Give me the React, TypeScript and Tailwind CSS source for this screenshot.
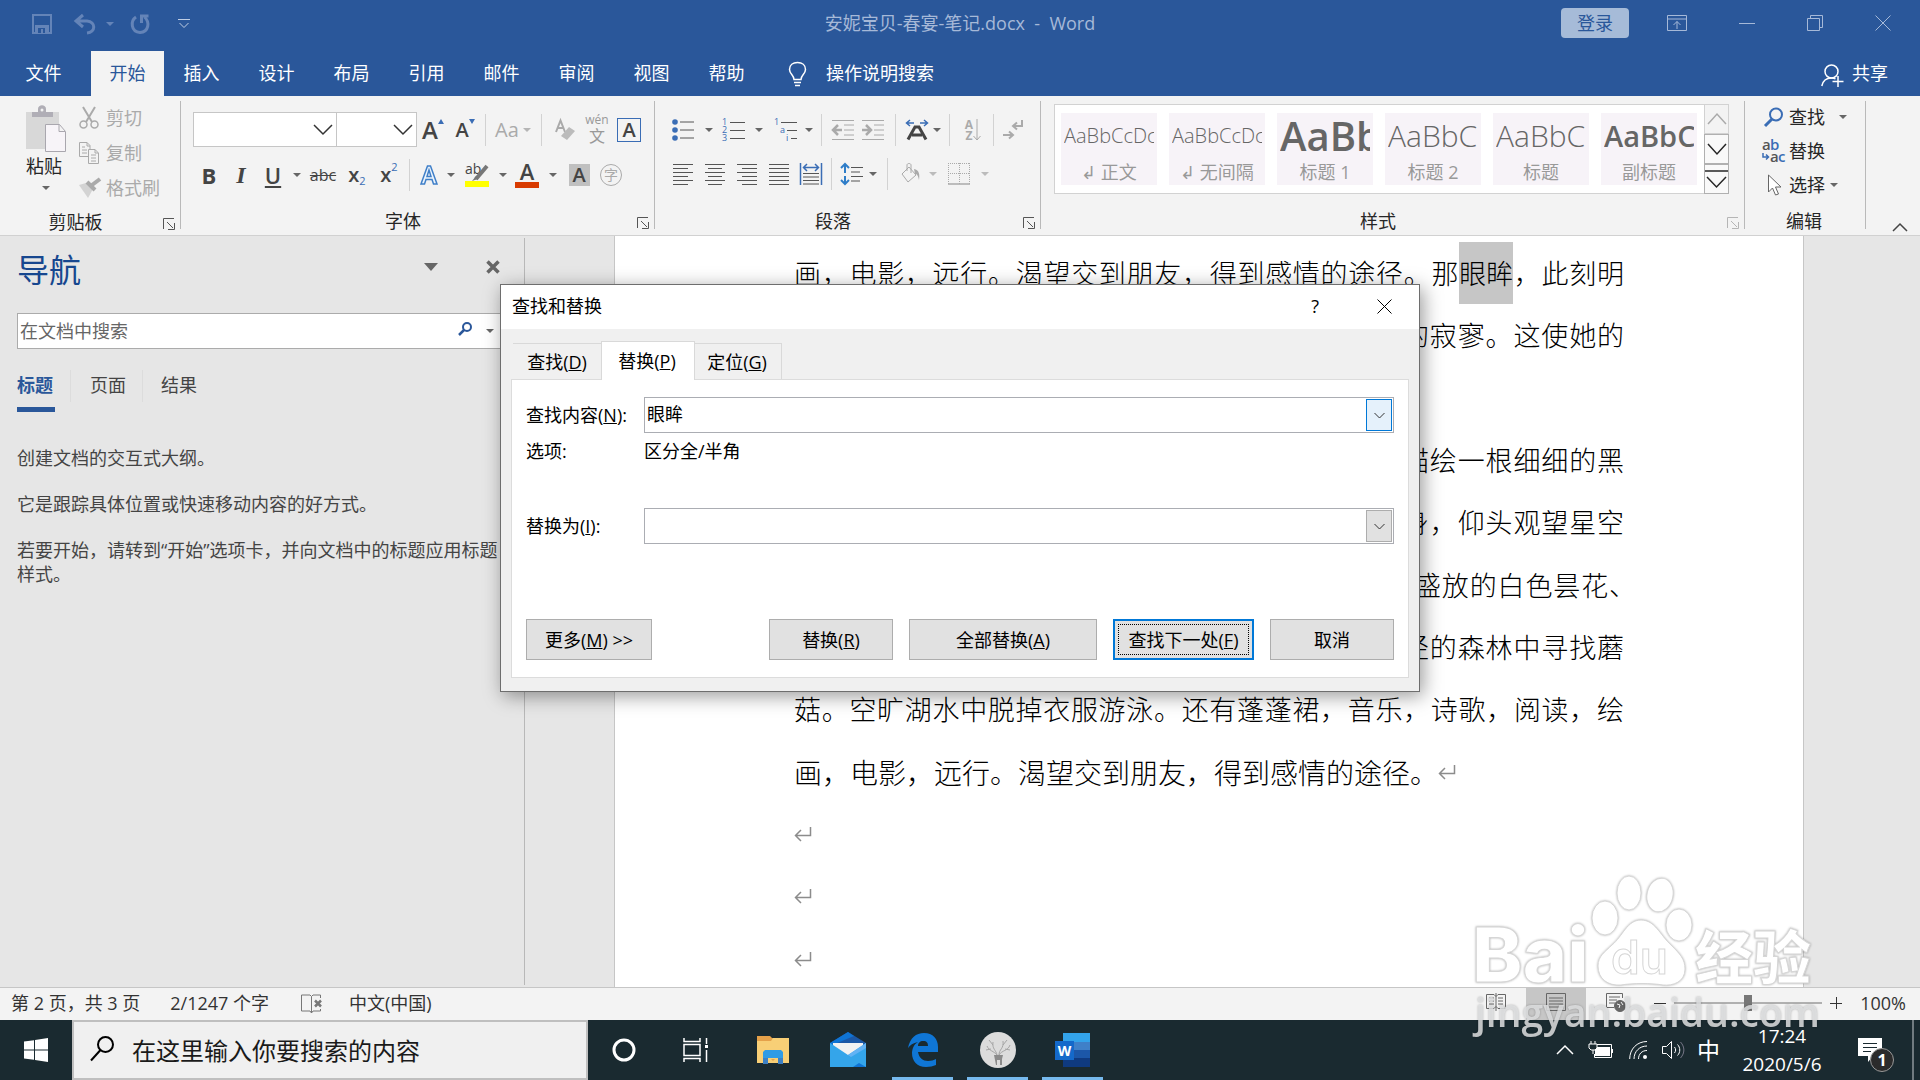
import type { ReactNode } from "react";

interface IconProps {
	w: number;
	h: number;
	className?: string;
	children: ReactNode;
}

function Icon({ w, h, className = "", children }: IconProps) {
	return (
		<svg
			width={w}
			height={h}
			viewBox={`0 0 ${w} ${h}`}
			fill="none"
			stroke="currentColor"
			className={`shrink-0 overflow-visible ${className}`}
			aria-hidden="true"
		>
			{children}
		</svg>
	);
}

function Caret({ className = "text-[#666]" }: { className?: string }) {
	return (
		<Icon w={8} h={4} className={className}>
			<path d="M0 0h8L4 4z" fill="currentColor" stroke="none" />
		</Icon>
	);
}

function CaretButton({
	className,
	tone,
	label,
}: {
	className: string;
	tone?: string;
	label: string;
}) {
	return (
		<button
			type="button"
			aria-label={label}
			className={`flex h-8 shrink-0 items-center justify-center ${className}`}
		>
			<Caret className={tone} />
		</button>
	);
}

function Tool({
	label,
	className = "w-8",
	children,
}: {
	label: string;
	className?: string;
	children: ReactNode;
}) {
	return (
		<button
			type="button"
			aria-label={label}
			className={`flex h-8 shrink-0 items-center justify-center ${className}`}
		>
			{children}
		</button>
	);
}

function Divider({ className = "w-2" }: { className?: string }) {
	return (
		<div className={`flex h-8 shrink-0 justify-center ${className}`}>
			<div className="w-px bg-[#d2d2d2]" />
		</div>
	);
}

function GroupDivider() {
	return <div className="mt-[5px] h-32 w-px shrink-0 bg-[#b9b9b9]" />;
}

function GroupLabel({
	children,
	dim = false,
}: {
	children: ReactNode;
	dim?: boolean;
}) {
	return (
		<div className="mt-auto flex h-7 items-center">
			<span className="flex-1 pr-3 text-center">{children}</span>
			<button type="button" aria-label="更多选项" className="mr-[5px] mt-1">
				<Icon w={12} h={12} className={dim ? "text-[#b5b5b5]" : "text-[#555]"}>
					<path d="M.5 11V.5H11M4 4l6 6M11.5 5v6.5H5" />
				</Icon>
			</button>
		</div>
	);
}

function Lines({ rows }: { rows: [number, number][] }) {
	return (
		<Icon w={20} h={22} className="text-[#555]">
			{rows.map(([from, to], i) => (
				<path key={`${from}-${i * 4}`} d={`M${from} ${i * 4 + 1.5}H${to}`} />
			))}
		</Icon>
	);
}

function TitleBar() {
	return (
		<div className="relative flex h-[51px] items-start text-[#a6b9d8]">
			<div className="flex h-12 items-center pl-8 text-[#6484b8]">
				<button type="button" aria-label="保存">
					<Icon w={20} h={20}>
						<path d="M1 1h18v18H1z" strokeWidth="2" />
						<path d="M3 11h14v8H3z" fill="currentColor" stroke="none" />
						<path d="M6 14h7v5H6z" fill="#2a579a" stroke="none" />
						<path d="M9 15h2v4H9z" fill="currentColor" stroke="none" />
					</Icon>
				</button>
				<button type="button" aria-label="撤消" className="ml-[22px]">
					<Icon w={22} h={20}>
						<path d="M9 1L2 7l7 6M2 7h11c9 1 9 11 0 12" strokeWidth="3" />
					</Icon>
				</button>
				<button type="button" aria-label="撤消列表" className="ml-2.5">
					<Caret className="text-[#6484b8]" />
				</button>
				<button type="button" aria-label="重复" className="ml-4">
					<Icon w={20} h={20}>
						<path d="M6 3C0 7 1 18 10 18.500C19 18 20 8 14.500 3" strokeWidth="3" />
						<path d="M11.500 9V2h7" strokeWidth="3" />
					</Icon>
				</button>
				<button type="button" aria-label="自定义快速访问工具栏" className="ml-7">
					<Icon w={12} h={10} className="text-[#c0cee4]">
						<path d="M0 .5h12M1.500 4l4.500 4.500L10.500 4" />
					</Icon>
				</button>
			</div>
			<div className="absolute inset-x-0 top-0 flex h-12 justify-center whitespace-pre text-lg leading-[47px]">
				安妮宝贝-春宴-笔记.docx  -  Word
			</div>
			<div className="relative ml-auto flex h-[46px] items-center pr-[29px]">
				<button
					type="button"
					className="mr-[38px] h-[30px] w-[68px] rounded-sm bg-[#a6bbd8] text-lg leading-[30px] text-[#2a579a]"
				>
					登录
				</button>
				<button type="button" aria-label="功能区显示选项" className="mr-[52px]">
					<Icon w={20} h={16}>
						<path d="M.5.5h19v15H.5zM.5 4h19M10 14V6.500M6.500 10L10 6.500l3.500 3.500" />
					</Icon>
				</button>
				<button type="button" aria-label="最小化" className="mr-[52px]">
					<Icon w={16} h={16}>
						<path d="M0 8.500h16" />
					</Icon>
				</button>
				<button type="button" aria-label="向下还原" className="mr-[52px]">
					<Icon w={16} h={16}>
						<path d="M.5 3.500h12v12H.5zM3.500 3V.5h12v12H13" />
					</Icon>
				</button>
				<button type="button" aria-label="关闭">
					<Icon w={16} h={16}>
						<path d="M.5.5l15 15M15.500.5l-15 15" />
					</Icon>
				</button>
			</div>
		</div>
	);
}

const ribbonTabs = ["插入", "设计", "布局", "引用", "邮件", "审阅", "视图", "帮助"];

function RibbonTabs() {
	return (
		<div className="flex h-[45px] items-stretch text-lg leading-[43px] text-white">
			<button type="button" className="w-[91px] pr-1">
				文件
			</button>
			<button type="button" className="w-[73px] bg-[#f3f3f3] text-[#2a579a]">
				开始
			</button>
			{ribbonTabs.map((tab) => (
				<button type="button" key={tab} className="w-[75px]">
					{tab}
				</button>
			))}
			<button type="button" className="flex items-center pl-6">
				<Icon w={20} h={26} className="mr-[18px]">
					<path
						d="M6 18.500C6 14 1.500 13 1.500 8.500C1.500 4 5 1.500 9.500 1.500S17.500 4 17.500 8.500C17.500 13 13 14 13 18.500zM6 21.500h7M7 24.500h5"
						strokeWidth="1.500"
					/>
				</Icon>
				操作说明搜索
			</button>
			<button type="button" className="ml-auto mr-8 flex items-center">
				<Icon w={23} h={24} className="mr-2 mt-1">
					<circle cx="10.500" cy="7.500" r="6.500" strokeWidth="1.500" />
					<path
						d="M.8 22c1-5 4-8 9.700-8 2 0 3 .3 4 1M17 12v11M11.500 17.500h11"
						strokeWidth="1.500"
					/>
				</Icon>
				共享
			</button>
		</div>
	);
}

function ClipboardGroup() {
	return (
		<div className="flex w-[180px] shrink-0 flex-col">
			<div className="flex pl-[25px] pt-2">
				<button type="button" className="flex w-[42px] flex-col items-center">
					<Icon w={42} h={48} className="mb-0.5">
						<path d="M1 8h33v37H1z" fill="#d8d8d8" stroke="none" />
						<path
							d="M7 13V8h6V5c0-5 8-5 8 0v3h7v5z"
							fill="#b0aeb6"
							stroke="none"
						/>
						<circle cx="17" cy="6" r="1.500" fill="#f3f3f3" stroke="none" />
						<path d="M20.500 20.500h14l6 7v20h-20zM34 20.500v7h6" fill="#f7f4f8" stroke="#a9a7ae" />
					</Icon>
					<span className="pr-1 leading-6">粘贴</span>
					<span className="mt-2 pb-1">
						<Caret />
					</span>
				</button>
				<div className="ml-3 flex flex-col text-[#aaa]">
					<button type="button" className="flex h-[35px] items-center pb-2">
						<Icon w={20} h={22} className="mr-[7px]">
							<path d="M4 0l9 15M16 0L7 15" strokeWidth="2" />
							<circle cx="4.500" cy="17.500" r="3.500" strokeWidth="1.500" />
							<circle cx="15.500" cy="17.500" r="3.500" strokeWidth="1.500" />
						</Icon>
						剪切
					</button>
					<button type="button" className="flex h-[35px] items-center pb-2">
						<Icon w={20} h={22} className="mr-[7px]">
							<path d="M9 14.500H.5V.5H8l3 3V7M8 .5V4h3M3 5h3M3 8h5M3 11h5" />
							<path d="M9.500 7.500H16l3.500 3.500v10.500h-10zM16 7.500V11h3M12 13h5M12 16h5M12 19h5" />
						</Icon>
						复制
					</button>
					<button type="button" className="flex h-[35px] items-center pb-2">
						<Icon w={22} h={20} className="mr-[5px]">
							<path d="M0 7l7-2 7 6-5 9z" fill="#d3d3d3" stroke="none" />
							<path d="M8 4l8 8" strokeWidth="4" />
							<path d="M13 7l8-6" strokeWidth="4" />
						</Icon>
						格式刷
					</button>
				</div>
			</div>
			<GroupLabel>剪贴板</GroupLabel>
		</div>
	);
}

function RibbonSelect({ label, className }: { label: string; className: string }) {
	return (
		<div className={`relative h-[35px] shrink-0 ${className}`}>
			<select
				aria-label={label}
				className="h-full w-full appearance-none border border-[#c6c6c6] bg-white"
			/>
			<Icon
				w={20}
				h={12}
				className="pointer-events-none absolute right-1 top-3 text-[#333]"
			>
				<path d="M1 1l9 9 9-9" strokeWidth="1.500" />
			</Icon>
		</div>
	);
}

function FontGroup() {
	return (
		<div className="flex w-[473px] shrink-0 flex-col text-[#444]">
			<div className="flex items-center pl-3 pt-4">
				<RibbonSelect label="字体" className="w-36" />
				<RibbonSelect label="字号" className="-ml-px w-[81px]" />
				<Tool label="增大字号">
					<span className="text-2xl font-semibold">A</span>
					<Icon w={6} h={5} className="mb-4 text-[#3a6db5]">
						<path d="M0 5l3-5 3 5z" fill="currentColor" stroke="none" />
					</Icon>
				</Tool>
				<Tool label="减小字号">
					<span className="text-xl font-semibold">A</span>
					<Icon w={6} h={5} className="mb-4 text-[#3a6db5]">
						<path d="M0 0h6L3 5z" fill="currentColor" stroke="none" />
					</Icon>
				</Tool>
				<Divider />
				<Tool label="更改大小写" className="w-12 gap-1 text-[#aaa]">
					<span className="text-xl">Aa</span>
					<Caret className="text-[#b5b5b5]" />
				</Tool>
				<Divider />
				<Tool label="清除所有格式" className="w-10">
					<Icon w={20} h={22} className="text-[#aaa]">
						<path d="M1 13L5.500 1.500 10 13M3 9h5" strokeWidth="2" />
						<path d="M6 17l8-9 6 4-8 9z" fill="#bbb" stroke="none" />
					</Icon>
				</Tool>
				<Tool label="拼音指南" className="w-6 flex-col text-[#999]">
					<span className="text-xs leading-3">wén</span>
					<span className="text-base leading-5">文</span>
				</Tool>
				<Tool label="字符边框" className="w-10">
					<span className="h-6 w-6 border border-[#3a6db5] text-center text-xl font-semibold leading-[22px]">
						A
					</span>
				</Tool>
			</div>
			<div className="flex items-center pl-3 pt-3">
				<Tool label="加粗">
					<span className="text-[22px] font-bold">B</span>
				</Tool>
				<Tool label="倾斜" className="w-8">
					<span className="font-['Liberation_Serif',serif] text-2xl font-bold italic">
						I
					</span>
				</Tool>
				<Tool label="下划线" className="w-8">
					<span className="text-[22px] font-semibold underline decoration-2 underline-offset-2">
						U
					</span>
				</Tool>
				<CaretButton label="下划线样式" className="w-4" />
				<Tool label="删除线" className="w-9">
					<span className="text-base line-through">abc</span>
				</Tool>
				<Tool label="下标">
					<span className="text-xl font-semibold leading-6">x</span>
					<span className="mt-3 text-[11px] text-[#3a6db5]">2</span>
				</Tool>
				<Tool label="上标">
					<span className="text-xl font-semibold leading-6">x</span>
					<span className="mb-4 text-[11px] text-[#3a6db5]">2</span>
				</Tool>
				<Divider />
				<Tool label="文本效果">
					<Icon w={18} h={20} className="text-[#3f7fc8]">
						<path
							d="M1 19L7.500 1h3L17 19h-3.500l-1.500-4.500H6L4.500 19zM7 11.500h4L9 5z"
							fill="#eaf3fc"
							strokeWidth="1.500"
						/>
					</Icon>
				</Tool>
				<CaretButton label="文本效果列表" className="w-3" />
				<Tool label="突出显示" className="w-10">
					<Icon w={24} h={26}>
						<text
							x="0"
							y="12"
							fontSize="14"
							fill="#444"
							stroke="none"
							fontFamily="Open Sans"
						>
							ab
						</text>
						<path d="M22 4L11 17" stroke="#777" strokeWidth="4" />
						<path d="M11 14l-4 5 6-2z" fill="#777" stroke="none" />
						<path d="M0 19h24v6H0z" fill="#ffff00" stroke="none" />
					</Icon>
				</Tool>
				<CaretButton label="突出显示颜色" className="w-3" />
				<Tool label="字体颜色" className="w-9 flex-col">
					<span className="text-[22px] font-semibold leading-[18px]">A</span>
					<span className="mt-0.5 h-1.5 w-6 bg-[#d83b01]" />
				</Tool>
				<CaretButton label="字体颜色列表" className="w-4" />
				<Tool label="字符底纹" className="w-9">
					<span className="h-[22px] w-[21px] bg-[#c0c0c0] text-center text-xl font-semibold leading-[22px]">
						A
					</span>
				</Tool>
				<Tool label="带圈字符" className="w-7">
					<span className="h-[22px] w-[22px] rounded-full border border-[#aaa] text-center text-sm leading-5 text-[#aaa]">
						字
					</span>
				</Tool>
			</div>
			<div className="mt-auto text-[#262626]">
				<GroupLabel>字体</GroupLabel>
			</div>
		</div>
	);
}

function ParagraphGroup() {
	return (
		<div className="flex w-[385px] shrink-0 flex-col text-[#555]">
			<div className="flex items-center pl-1.5 pt-[18px]">
				<Tool label="项目符号" className="w-11">
					<Icon w={22} h={24}>
						<path d="M8 4h14M8 12h14M8 20h14" />
						<g fill="#3a6db5" stroke="none">
							<circle cx="3" cy="4" r="2.800" />
							<circle cx="3" cy="12" r="2.800" />
							<circle cx="3" cy="20" r="2.800" />
						</g>
					</Icon>
				</Tool>
				<CaretButton label="项目符号库" className="w-2" />
				<Tool label="编号" className="w-10">
					<Icon w={23} h={24}>
						<path d="M8 4.500h15M8 12.500h15M8 20.500h15" />
						<g fill="#3a6db5" stroke="none" fontSize="9" fontFamily="Open Sans">
							<text x="0" y="7">1</text>
							<text x="0" y="15">2</text>
							<text x="0" y="23">3</text>
						</g>
					</Icon>
				</Tool>
				<CaretButton label="编号库" className="w-3" />
				<Tool label="多级列表" className="w-10">
					<Icon w={24} h={24}>
						<path d="M8 4.500h16M14 12.500h10M18 20.500h6" />
						<g fill="#3a6db5" stroke="none" fontSize="9" fontFamily="Open Sans">
							<text x="1" y="7">1</text>
							<text x="7" y="15">a</text>
							<text x="13" y="23">i</text>
						</g>
					</Icon>
				</Tool>
				<CaretButton label="多级列表库" className="w-2" />
				<Divider className="w-4" />
				<Tool label="减少缩进量" className="w-7">
					<Icon w={22} h={22} className="text-[#aaa]">
						<path d="M0 1.500h22M12 6h10M12 11h10M12 16h10M0 20.500h22" />
						<path d="M6 6l-5 5 5 5M1 11h9" strokeWidth="2.500" />
					</Icon>
				</Tool>
				<Tool label="增加缩进量">
					<Icon w={22} h={22} className="text-[#aaa]">
						<path d="M0 1.500h22M12 6h10M12 11h10M12 16h10M0 20.500h22" />
						<path d="M4 6l5 5-5 5M0 11h9" strokeWidth="2.500" />
					</Icon>
				</Tool>
				<Divider className="w-3" />
				<Tool label="中文版式">
					<Icon w={24} h={22}>
						<path d="M3 20.500L10 8h4l7 12.500M7 16h10" stroke="#444" strokeWidth="3" />
						<path
							d="M5 1L1.500 4 5 7M1.500 4H9M19 1l3.500 3L19 7M22.500 4H15"
							stroke="#3a6db5"
							strokeWidth="1.500"
						/>
					</Icon>
				</Tool>
				<CaretButton label="中文版式列表" className="w-2" />
				<Divider className="w-4" />
				<Tool label="排序" className="w-8">
					<span className="flex flex-col text-xs font-bold leading-[11px] text-[#aaa]">
						<span>A</span>
						<span>Z</span>
					</span>
					<Icon w={8} h={22} className="text-[#aaa]">
						<path d="M4 0v21M.5 17L4 21l3.500-4" />
					</Icon>
				</Tool>
				<Divider />
				<Tool label="显示编辑标记">
					<Icon w={20} h={20} className="text-[#aaa]">
						<path
							d="M19 0v6h-8M14 2.500L10 6l4 3.500M0 15h9M6 11.500L10 15l-4 3.500"
							strokeWidth="2"
						/>
					</Icon>
				</Tool>
			</div>
			<div className="flex items-center pl-3 pt-3">
				<Tool label="左对齐">
					<Lines rows={[[0, 20], [0, 15], [0, 20], [0, 15], [0, 20], [0, 15]]} />
				</Tool>
				<Tool label="居中">
					<Lines rows={[[0, 20], [3, 17], [0, 20], [3, 17], [0, 20], [3, 17]]} />
				</Tool>
				<Tool label="右对齐">
					<Lines rows={[[0, 20], [5, 20], [0, 20], [5, 20], [0, 20], [5, 20]]} />
				</Tool>
				<Tool label="两端对齐">
					<Lines rows={[[0, 20], [0, 20], [0, 20], [0, 20], [0, 20], [0, 20]]} />
				</Tool>
				<Tool label="分散对齐">
					<Icon w={22} h={22}>
						<path d="M3 10.500h16M3 14h16M3 17.500h16M3 21h16" />
						<path
							d="M.5 0v22M21.500 0v22M3 4.500h16M7 1L3.500 4.500 7 8M15 1l3.500 3.500L15 8"
							stroke="#3a6db5"
							strokeWidth="1.500"
						/>
					</Icon>
				</Tool>
				<Divider />
				<Tool label="行距">
					<Icon w={23} h={22}>
						<path d="M11 4.500h12M11 9h9M11 13.500h12M11 18h9" />
						<path
							d="M5 1v9M5 13v8M1 5l4-4 4 4M1 17l4 4 4-4"
							stroke="#2e7dc8"
							strokeWidth="2"
						/>
					</Icon>
				</Tool>
				<CaretButton label="行距列表" className="w-3" />
				<Divider className="w-4" />
				<Tool label="底纹">
					<Icon w={20} h={22} className="text-[#aaa]">
						<path d="M8 4l7 8-8 7-6-8zM6 8V2c0-2 4-2 4 0v8" />
						<path d="M13 6c5 1 6 5 5 11-1-5-2-6-4-6z" fill="currentColor" stroke="none" />
					</Icon>
				</Tool>
				<CaretButton label="底纹颜色" className="w-3" tone="text-[#bbb]" />
				<Tool label="边框" className="w-10">
					<Icon w={22} h={22} className="text-[#aaa]">
						<path
							d="M.5 0v21M11.500 0v21M21.500 0v21M0 .5h22M0 10.500h22"
							strokeDasharray="1 1"
						/>
						<path d="M0 21h22" strokeWidth="1.500" />
					</Icon>
				</Tool>
				<CaretButton label="边框列表" className="w-3" tone="text-[#bbb]" />
			</div>
			<div className="mt-auto text-[#262626]">
				<GroupLabel>段落</GroupLabel>
			</div>
		</div>
	);
}

const styleCards = [
	{ name: "↲ 正文", sample: "AaBbCcDc", look: "text-xl font-light" },
	{ name: "↲ 无间隔", sample: "AaBbCcDc", look: "text-xl font-light" },
	{ name: "标题 1", sample: "AaBb", look: "text-[40px] font-semibold" },
	{ name: "标题 2", sample: "AaBbC", look: "text-[30px] font-light" },
	{ name: "标题", sample: "AaBbC", look: "text-[30px] font-light" },
	{ name: "副标题", sample: "AaBbC", look: "text-[29px] font-semibold" },
];

function StylesGroup() {
	return (
		<div className="flex min-w-0 flex-1 flex-col pt-2">
			<div className="ml-[13px] mr-[15px] flex h-[90px] border border-[#d2d2d2] bg-white">
				<div className="flex min-w-0 flex-1 gap-3 overflow-hidden px-1.5 py-2">
					{styleCards.map((card) => (
						<button
							type="button"
							key={card.name}
							className="flex w-24 shrink-0 flex-col overflow-hidden bg-[#f7f3f8] px-[3px] text-[#666]"
						>
							<span
								className={`block h-[46px] w-full overflow-hidden whitespace-nowrap text-left leading-[46px] ${card.look}`}
							>
								{card.sample}
							</span>
							<span className="block w-full text-center leading-[26px] text-[#999]">
								{card.name}
							</span>
						</button>
					))}
				</div>
				<div className="-my-px -mr-px flex w-[25px] flex-col">
					<button
						type="button"
						aria-label="上一行"
						className="flex flex-1 items-center justify-center border border-[#d2d2d2] bg-[#f3f3f3] text-[#aaa]"
					>
						<Icon w={20} h={12}>
							<path d="M1 11l9-10 9 10" strokeWidth="1.500" />
						</Icon>
					</button>
					<button
						type="button"
						aria-label="下一行"
						className="flex flex-1 items-center justify-center border border-[#b0b0b0] bg-[#f9f9f9] text-[#262626]"
					>
						<Icon w={20} h={12}>
							<path d="M1 1l9 10 9-10" strokeWidth="1.500" />
						</Icon>
					</button>
					<button
						type="button"
						aria-label="其他"
						className="flex flex-1 items-center justify-center border border-[#b0b0b0] bg-[#f9f9f9] text-[#262626]"
					>
						<Icon w={23} h={20}>
							<path d="M0 2h23M2 8l9.500 10L21 8" strokeWidth="1.500" />
						</Icon>
					</button>
				</div>
			</div>
			<GroupLabel dim>样式</GroupLabel>
		</div>
	);
}

function EditGroup() {
	return (
		<div className="flex w-[120px] shrink-0 flex-col pl-[19px] pt-1">
			<button type="button" className="flex h-[34px] items-center">
				<Icon w={20} h={20} className="mr-[5px] text-[#3a6db5]">
					<circle cx="12" cy="7.500" r="6" strokeWidth="2" />
					<path d="M8 12l-7 7" strokeWidth="3" />
				</Icon>
				查找
				<span className="ml-[14px]">
					<Caret />
				</span>
			</button>
			<button type="button" className="flex h-[34px] items-center">
				<Icon w={24} h={24} className="-ml-0.5 mr-[3px]">
					<g stroke="none" fontSize="15" fontFamily="Open Sans" fontWeight="600">
						<text x="0" y="11" fill="#555">a</text>
						<text x="8" y="11" fill="#3a6db5">b</text>
						<text x="8" y="23" fill="#555">a</text>
						<text x="16" y="23" fill="#3a6db5">c</text>
					</g>
					<path d="M1 14v4h5M4 15.500L6.500 18 4 20.500" stroke="#3a6db5" strokeWidth="1.500" />
				</Icon>
				替换
			</button>
			<button type="button" className="flex h-[34px] items-center">
				<Icon w={20} h={22} className="mr-[5px] text-[#666]">
					<path d="M4.500 1v17l4-4 3 7 3-1-3-7h5.500z" fill="#fff" />
				</Icon>
				选择
				<span className="ml-[5px]">
					<Caret />
				</span>
			</button>
			<div className="mt-auto flex h-7 items-center pl-[22px]">编辑</div>
		</div>
	);
}

function Ribbon() {
	return (
		<div className="flex h-[140px] shrink-0 border-b border-[#d1d1d1] bg-[#f3f3f3] text-lg leading-6 text-[#262626]">
			<ClipboardGroup />
			<GroupDivider />
			<FontGroup />
			<GroupDivider />
			<ParagraphGroup />
			<GroupDivider />
			<StylesGroup />
			<GroupDivider />
			<EditGroup />
			<GroupDivider />
			<div className="flex w-[54px] items-end justify-end pb-[3px] pr-3">
				<button type="button" aria-label="折叠功能区">
					<Icon w={16} h={9} className="text-[#444]">
						<path d="M1 8l7-7 7 7" strokeWidth="1.500" />
					</Icon>
				</button>
			</div>
		</div>
	);
}

function NavigationPane() {
	return (
		<aside className="my-0.5 w-[525px] shrink-0 border-r border-[#b8b8b8] px-[17px] pt-2.5 text-lg leading-6 text-[#444]">
			<div className="flex h-11 items-center">
				<h2 className="text-[32px] leading-[44px] text-[#17478f]">导航</h2>
				<button type="button" aria-label="任务窗格选项" className="ml-auto mb-1.5">
					<Icon w={14} h={8} className="text-[#666]">
						<path d="M0 0h14L7 8z" fill="currentColor" stroke="none" />
					</Icon>
				</button>
				<button type="button" aria-label="关闭窗格" className="mb-1.5 ml-12 mr-[7px]">
					<Icon w={14} h={14} className="text-[#666]">
						<path d="M1.500 1.500l11 11M12.500 1.500l-11 11" strokeWidth="3.500" />
					</Icon>
				</button>
			</div>
			<div className="mt-[21px] flex h-9 items-center border border-[#ababab] bg-white pr-3">
				<input
					type="text"
					aria-label="在文档中搜索"
					placeholder="在文档中搜索"
					className="min-w-0 flex-1 pl-0.5 outline-none placeholder:text-[#666]"
				/>
				<button type="button" aria-label="搜索">
					<Icon w={14} h={14} className="mb-1 text-[#2a579a]">
						<circle cx="9" cy="5" r="4" strokeWidth="2" />
						<path d="M6 8l-5 5" strokeWidth="2.500" />
					</Icon>
				</button>
				<button type="button" aria-label="搜索选项" className="ml-3.5">
					<Caret />
				</button>
			</div>
			<div className="mt-[21px] flex h-[42px]">
				<button
					type="button"
					className="flex w-[38px] items-start border-b-[5px] border-[#2a579a] pt-[3px] font-bold text-[#2a579a]"
				>
					标题
				</button>
				<div className="mx-[15px] h-8 w-px bg-[#dcdcdc]" />
				<button type="button" className="flex w-10 items-start justify-end pt-[3px]">
					页面
				</button>
				<div className="mx-4 h-8 w-px bg-[#dcdcdc]" />
				<button type="button" className="flex w-[42px] items-start pl-0.5 pt-[3px]">
					结果
				</button>
			</div>
			<p className="mt-[34px]">创建文档的交互式大纲。</p>
			<p className="mt-[22px]">它是跟踪具体位置或快速移动内容的好方式。</p>
			<p className="mt-[22px]">
				若要开始，请转到“开始”选项卡，并向文档中的标题应用标题样式。
			</p>
		</aside>
	);
}

function Mark() {
	return (
		<Icon w={18} h={16} className="text-[#8c8c8c]">
			<path d="M16.500 1v8.500H2M7 4L1.500 9.500 7 15" strokeWidth="1.500" />
		</Icon>
	);
}

function FullLine({ children }: { children: ReactNode }) {
	return <p className="[text-align-last:justify]">{children}</p>;
}

function LineTail({
	hanging = false,
	children,
}: {
	hanging?: boolean;
	children: ReactNode;
}) {
	return (
		<p
			className={`ml-auto w-[222px] whitespace-nowrap [text-align-last:justify] ${
				hanging ? "-mr-3" : ""
			}`}
		>
			{children}
		</p>
	);
}

function DocumentPage() {
	return (
		<main className="flex flex-1 overflow-hidden">
			<div className="ml-[89px] mr-[116px] flex-1 border-x border-[#c6c6c6] bg-white pt-1.5">
				<div className="ml-[179px] grid h-[748px] w-[830px] auto-rows-fr font-['Noto_Sans_CJK_SC',sans-serif] text-[27px] font-light leading-[62px] text-black">
					<FullLine>
						画，电影，远行。渴望交到朋友，得到感情的途径。那
						<mark className="inline-block h-full bg-[#c6c6c6] text-black">眼眸</mark>
						，此刻明
					</FullLine>
					<LineTail>的寂寥。这使她的</LineTail>
					<p />
					<LineTail>描绘一根细细的黑</LineTail>
					<LineTail>身，仰头观望星空</LineTail>
					<LineTail hanging>盛放的白色昙花、</LineTail>
					<LineTail>径的森林中寻找蘑</LineTail>
					<FullLine>
						菇。空旷湖水中脱掉衣服游泳。还有蓬蓬裙，音乐，诗歌，阅读，绘
					</FullLine>
					<p className="flex items-center whitespace-nowrap text-[28px]">
						画，电影，远行。渴望交到朋友，得到感情的途径。
						<Mark />
					</p>
					<p className="flex items-center">
						<Mark />
					</p>
					<p className="flex items-center">
						<Mark />
					</p>
					<p className="flex items-center">
						<Mark />
					</p>
				</div>
			</div>
		</main>
	);
}

function ComboBox({
	id,
	value,
	active = false,
}: {
	id: string;
	value: string;
	active?: boolean;
}) {
	return (
		<div className="flex h-9 flex-1 border border-[#abadb3] bg-white p-px">
			<input
				id={id}
				type="text"
				defaultValue={value}
				className="min-w-0 flex-1 pl-px pb-0.5 outline-none"
			/>
			<button
				type="button"
				aria-label="打开列表"
				className={`flex w-[26px] items-center justify-center border ${
					active ? "border-[#0078d7] bg-[#e5f1fb]" : "border-[#adadad] bg-[#e1e1e1]"
				}`}
			>
				<Icon w={11} h={7} className="text-[#333]">
					<path d="M.5 1l5 5 5-5" />
				</Icon>
			</button>
		</div>
	);
}

const dialogButton = "h-[41px] border border-[#adadad] bg-[#e1e1e1]";

function FindReplaceDialog() {
	return (
		<div
			role="dialog"
			aria-labelledby="dialog-title"
			className="absolute left-[500px] top-[284px] w-[920px] border border-[#6e6e6e] bg-[#f0f0f0] text-lg leading-6 text-black shadow-[3px_4px_18px_rgba(0,0,0,0.4)]"
		>
			<div className="flex h-11 items-center bg-white pb-0.5 pl-[11px] pr-[27px]">
				<h2 id="dialog-title">查找和替换</h2>
				<button type="button" aria-label="帮助" className="ml-auto">
					?
				</button>
				<button type="button" aria-label="关闭" className="ml-[58px]">
					<Icon w={15} h={15}>
						<path d="M.5.5l14 14M14.500.5l-14 14" />
					</Icon>
				</button>
			</div>
			<div className="px-2.5 pb-[13px] pt-[11px]">
				<div className="flex h-[39px] items-end">
					<button
						type="button"
						className="ml-0.5 h-9 w-[88px] border-t border-[#d9d9d9]"
					>
						查找(<u>D</u>)
					</button>
					<button
						type="button"
						className="z-10 -mb-px h-[39px] w-[94px] border border-b-0 border-[#d9d9d9] bg-white pr-0.5"
					>
						替换(<u>P</u>)
					</button>
					<button
						type="button"
						className="h-9 w-[87px] border-r border-t border-[#d9d9d9] pr-0.5"
					>
						定位(<u>G</u>)
					</button>
				</div>
				<div className="h-[299px] border border-[#dcdcdc] bg-white pl-3.5 pr-[14px] pt-[17px]">
					<div className="flex items-center">
						<label htmlFor="find-what" className="w-[118px]">
							查找内容(<u>N</u>):
						</label>
						<ComboBox id="find-what" value="眼眸" active />
					</div>
					<div className="mt-1.5 flex">
						<span className="w-[118px]">选项:</span>
						<span>区分全/半角</span>
					</div>
					<div className="mt-[45px] flex items-center">
						<label htmlFor="replace-with" className="w-[118px]">
							替换为(<u>I</u>):
						</label>
						<ComboBox id="replace-with" value="" />
					</div>
					<div className="mt-[75px] flex">
						<button type="button" className={`w-[126px] ${dialogButton}`}>
							更多(<u>M</u>) &gt;&gt;
						</button>
						<button type="button" className={`ml-auto w-[124px] ${dialogButton}`}>
							替换(<u>R</u>)
						</button>
						<button type="button" className={`ml-4 w-[188px] ${dialogButton}`}>
							全部替换(<u>A</u>)
						</button>
						<button
							type="button"
							className="ml-4 h-[41px] w-[141px] border-2 border-[#0078d7] bg-[#e1e1e1] p-[3px]"
						>
							<span className="flex h-full items-center justify-center border border-dotted border-black">
								查找下一处(<u>F</u>)
							</span>
						</button>
						<button type="button" className={`ml-4 w-[124px] ${dialogButton}`}>
							取消
						</button>
					</div>
				</div>
			</div>
		</div>
	);
}

function StatusBar() {
	return (
		<footer className="flex h-[33px] shrink-0 items-center border-t border-[#c6c6c6] bg-[#f3f3f3] pl-[11px] pr-3.5 text-lg leading-6 text-[#333]">
			<span className="pb-0.5">第 2 页，共 3 页</span>
			<span className="ml-[30px] pb-0.5">2/1247 个字</span>
			<Icon w={22} h={20} className="ml-8 text-[#777]">
				<path d="M10.500 2.500L9 1H.5v16H9l1.500 2V2.500L12 1h7.500v3M10.500 19l1.500-2h7.500v-2" />
				<path d="M14 6.500l6 6M20 6.500l-6 6" strokeWidth="2.500" />
			</Icon>
			<span className="ml-[26px] pb-0.5">中文(中国)</span>
			<div className="ml-auto flex h-full items-center text-[#666]">
				<button type="button" aria-label="阅读视图" className="mb-1 mr-5">
					<Icon w={20} h={18}>
						<path d="M8 1.500H.5v14H8M12 1.500h7.500v14H12M10 0v18M3 5h5M3 8h5M3 11h5M12 5h5M12 8h5M12 11h5" />
						<path d="M8 1.500l2 2 2-2M8 15.500l2-2 2 2" />
					</Icon>
				</button>
				<button
					type="button"
					aria-label="页面视图"
					className="flex h-full w-[60px] items-center justify-center bg-[#c6c6c6] pb-1"
				>
					<Icon w={20} h={18}>
						<path d="M.5.5h19v17H.5zM3 5h14M3 8h14M3 11h14M3 14h14" />
					</Icon>
				</button>
				<button type="button" aria-label="Web 版式视图" className="mb-1 ml-5">
					<Icon w={20} h={20}>
						<path d="M8 15.500H.5v-14h16V6M3 5h11M3 8h8M3 11h6" />
						<circle cx="14" cy="14" r="5.500" fill="#666" />
						<path d="M11 12l3 1-1 3M15 10l2 3" stroke="#f3f3f3" />
					</Icon>
				</button>
				<button type="button" aria-label="缩小" className="mb-0.5 ml-7">
					<Icon w={12} h={12} className="text-[#333]">
						<path d="M0 6.500h12" />
					</Icon>
				</button>
				<input
					type="range"
					aria-label="显示比例"
					min={0}
					max={100}
					defaultValue={50}
					className="mx-2 mb-0.5 h-4 w-[148px] appearance-none bg-[linear-gradient(#b0b0b0,#b0b0b0)] bg-[length:100%_2px] bg-center bg-no-repeat [&::-webkit-slider-thumb]:h-4 [&::-webkit-slider-thumb]:w-2 [&::-webkit-slider-thumb]:appearance-none [&::-webkit-slider-thumb]:bg-[#777]"
				/>
				<button type="button" aria-label="放大" className="mb-0.5">
					<Icon w={12} h={12} className="text-[#333]">
						<path d="M0 6.500h12M6.500 0v12" />
					</Icon>
				</button>
				<span className="ml-[18px] pb-0.5 text-[#333]">100%</span>
			</div>
		</footer>
	);
}

function TaskApp({
	label,
	running = false,
	children,
}: {
	label: string;
	running?: boolean;
	children: ReactNode;
}) {
	return (
		<button
			type="button"
			aria-label={label}
			className="relative flex w-[75px] items-center justify-center"
		>
			{children}
			{running && (
				<span className="absolute inset-x-[7px] bottom-0 h-[3px] bg-[#76b9ed]" />
			)}
		</button>
	);
}

function Taskbar() {
	return (
		<div className="flex h-[60px] shrink-0 bg-[#1a2a30] text-white">
			<button
				type="button"
				aria-label="开始"
				className="flex w-[72px] items-center justify-center"
			>
				<Icon w={24} h={24}>
					<path
						d="M0 3.500l10-1.300v9.300H0zM11 2l13-2v11.500H11zM0 12.500h10v9.300L0 20.500zM11 12.500h13V24l-13-2z"
						fill="#fff"
						stroke="none"
					/>
				</Icon>
			</button>
			<div className="flex w-[516px] items-center border-2 border-[#bfbfbf] bg-[#f0f0f0] pl-4 text-black">
				<Icon w={24} h={26} className="mb-0.5">
					<circle cx="15.500" cy="8.500" r="7.500" strokeWidth="2" />
					<path d="M10.500 14L1 24.500" strokeWidth="2" />
				</Icon>
				<input
					type="text"
					aria-label="在这里输入你要搜索的内容"
					placeholder="在这里输入你要搜索的内容"
					className="ml-[18px] min-w-0 flex-1 pt-0.5 text-2xl outline-none placeholder:text-[#1a1a1a]"
				/>
			</div>
			<button type="button" aria-label="Cortana" className="flex w-[72px] items-center justify-center">
				<Icon w={26} h={26}>
					<circle cx="13" cy="13" r="10" strokeWidth="3" />
				</Icon>
			</button>
			<button type="button" aria-label="任务视图" className="flex w-[75px] items-center justify-center pr-1">
				<Icon w={26} h={26}>
					<path d="M1 1v3.500h16V1M1 7.500h16v11H1zM1 25v-3.500h16V25M23.500 1v6M23.500 13v12" strokeWidth="1.500" />
					<path d="M22 8h3v3h-3z" fill="#fff" stroke="none" />
				</Icon>
			</button>
			<TaskApp label="文件资源管理器">
				<Icon w={32} h={28}>
					<g stroke="none">
						<path d="M0 0h13l2 2h17v5H0z" fill="#e5a14a" />
						<path d="M0 5h14l2-3h16v25H0z" fill="#f8cf76" />
						<path d="M6 28V16l2-2h16l2 2v12h-5v-5H11v5z" fill="#2f9be6" />
						<path d="M6 22h5v6H6zM21 22h5v6h-5z" fill="#3d80c4" />
						<path d="M11 22h10v5H11z" fill="#f8cf76" />
						<path d="M14 23h4l-2 2z" fill="#e5a14a" />
					</g>
				</Icon>
			</TaskApp>
			<TaskApp label="邮件">
				<Icon w={36} h={36}>
					<g stroke="none">
						<path d="M0 11L18 0l18 11v24H0z" fill="#1c58a6" />
						<path d="M0 11L18 0l6 4L0 14z" fill="#0f74d4" />
						<path d="M3 11h30v8L18 27 3 19z" fill="#f2f2f2" />
						<path d="M0 11l18 12 18-12v24H0z" fill="#34a5ea" />
						<path d="M18 23l18-12v5L21 25z" fill="#62b2f4" />
						<path d="M23 35l6-4 7 4z" fill="#0f74d4" />
					</g>
				</Icon>
			</TaskApp>
			<TaskApp label="Microsoft Edge" running>
				<Icon w={30} h={34}>
					<path
						d="M0 15C2 5 8 0 16 0c9 0 14 6 14 14v5H10c1 6 5 9 10 9 3 0 6-1 8-2v6c-3 1-6 2-10 2C9 34 4 28 4 20c0-4 2-9 6-11C5 10 2 12 0 15zm10-2h10c0-3-1-5-5-5-3 0-5 2-5 5z"
						fill="#0f76d6"
						stroke="none"
					/>
				</Icon>
			</TaskApp>
			<TaskApp label="应用" running>
				<Icon w={36} h={38}>
					<circle cx="18" cy="19" r="18" fill="#dcdcdc" stroke="none" />
					<path
						d="M17 24C14 20 9 20 7 15M17 24c-1-5-5-6-4-13M11 18l-5 1M13 14l-4-5M19 24c3-5 9-4 11-10M19 24c0-6 5-6 4-14M25 18l5 1M23 14l4-5"
						stroke="#a5a5a5"
					/>
					<path d="M14 24h9l-1 4v6h-2v-5h-3v5h-1z" fill="#8a8a8a" stroke="none" />
				</Icon>
			</TaskApp>
			<TaskApp label="Word" running>
				<Icon w={36} h={34}>
					<g stroke="none">
						<path d="M8 0h27v9H8z" fill="#33a3ea" />
						<path d="M8 9h27v9H8z" fill="#3f80c8" />
						<path d="M8 17h27v9H8z" fill="#1c57a8" />
						<path d="M8 25h27v9H8z" fill="#0f3a80" />
						<path d="M0 8h19v19H0z" fill="#1469ca" />
						<text
							x="9.500"
							y="22.500"
							fontSize="14"
							fontWeight="700"
							textAnchor="middle"
							fontFamily="Open Sans"
							fill="#fff"
						>
							W
						</text>
					</g>
				</Icon>
			</TaskApp>
			<div className="ml-auto flex items-center">
				<button type="button" aria-label="显示隐藏的图标" className="mr-[15px]">
					<Icon w={18} h={10}>
						<path d="M1 9l8-8 8 8" strokeWidth="1.500" />
					</Icon>
				</button>
				<Icon w={24} h={18} className="mr-4">
					<path d="M4.500 3.500h18v13h-17V13" />
					<path d="M8 6h13v9H6V9z" fill="#fff" stroke="none" />
					<path d="M0 3h8v4L6 9H2L0 7zM2 3V0M6 3V0M4 9v4" fill="#1a2a30" />
					<path d="M23.500 8v4" />
				</Icon>
				<Icon w={18} h={20} className="mr-[15px]">
					<path d="M.7 19C.7 9 8 1.500 18 1.500M5 19C5 11.500 10.500 6 18 6M9.500 19c0-5 3.500-8.500 8.500-8.500" />
					<circle cx="16" cy="17" r="2" fill="#fff" stroke="none" />
				</Icon>
				<Icon w={23} h={20} className="mr-3">
					<path d="M.5 6.500h4l5-5v17l-5-5h-4zM12.500 7c1.500 2 1.500 4 0 6" />
					<path d="M15.500 4.500c3 3 3 8 0 11" />
					<path d="M18.500 2c4.500 5 4.500 11 0 16" stroke="#778" />
				</Icon>
				<span className="mr-[17px] text-[23px]">中</span>
				<div className="w-[90px] text-center text-[19px] leading-7">
					<div>17:24</div>
					<div>2020/5/6</div>
				</div>
				<button type="button" aria-label="通知" className="relative ml-[31px] mr-[30px]">
					<Icon w={24} h={24}>
						<path d="M0 0h24v18h-9l-5 6v-6H0z" fill="#fff" stroke="none" />
						<path d="M5 5.500h14M5 9.500h14M5 13.500h8" stroke="#1a2a30" />
					</Icon>
					<span className="absolute left-3 top-2.5 h-6 w-6 rounded-full border border-[#999] bg-[#2b2b2b] text-center text-base font-bold leading-[22px]">
						1
					</span>
				</button>
				<div className="mr-1.5 h-full w-0.5 bg-[#717b80]" />
			</div>
		</div>
	);
}

function Watermark() {
	return (
		<svg
			width="350"
			height="176"
			viewBox="0 0 350 176"
			className="pointer-events-none absolute bottom-[34px] right-[100px] drop-shadow-[0_0_1px_rgba(0,0,0,0.3)]"
			fill="#fff"
			stroke="#d6d6d6"
			strokeWidth="1"
			fontFamily="Inter, 'Noto Sans CJK SC', sans-serif"
		>
			<text x="2" y="112" fontSize="76" fontWeight="800">Bai</text>
			<ellipse cx="135" cy="48" rx="13" ry="17" />
			<ellipse cx="159" cy="23" rx="12" ry="17" />
			<ellipse cx="190" cy="25" rx="13" ry="17" transform="rotate(12 190 25)" />
			<ellipse cx="209" cy="55" rx="13" ry="16" />
			<path d="M171 50c14 0 19 15 30 25 9 9 14 14 14 24 0 13-12 17-22 16-12-2-30-2-42 0-13 1-23-6-23-19 0-10 7-14 14-21 11-9 15-25 29-25z" />
			<text x="141" y="104" fontSize="46" fontWeight="600">du</text>
			<text x="225" y="109" fontSize="58" fontWeight="900">经验</text>
			<text
				x="5"
				y="157"
				fontSize="39"
				fontWeight="600"
				fontFamily="Open Sans"
				fill="#dfe1e2"
				fillOpacity="0.85"
				stroke="none"
			>
				jingyan.baidu.com
			</text>
		</svg>
	);
}

export default function App() {
	return (
		<div
			lang="zh-CN"
			className="relative flex h-screen flex-col overflow-hidden bg-[#e6e6e6] font-['Open_Sans','Noto_Sans_CJK_SC',sans-serif]"
		>
			<header className="shrink-0 bg-[#2a579a]">
				<TitleBar />
				<RibbonTabs />
			</header>
			<Ribbon />
			<div className="flex min-h-0 flex-1">
				<NavigationPane />
				<DocumentPage />
			</div>
			<StatusBar />
			<Taskbar />
			<FindReplaceDialog />
			<Watermark />
		</div>
	);
}
